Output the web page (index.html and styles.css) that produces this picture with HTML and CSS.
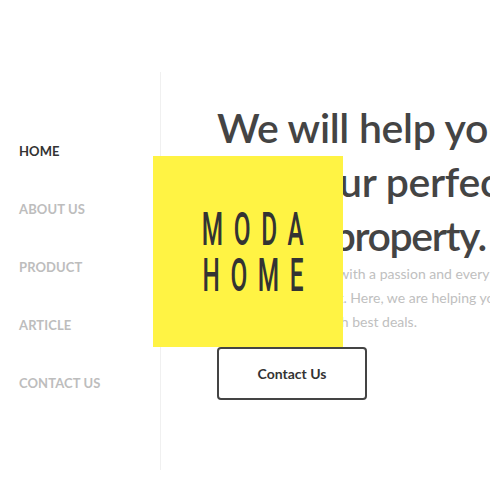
FILE: index.html
```html
<!DOCTYPE html>
<html lang="en">
<head>
<meta charset="utf-8">
<title>Moda Home</title>
<link rel="stylesheet" href="styles.css">
</head>
<body>
<div class="page">
  <aside class="sidebar">
    <nav class="nav">
      <a class="nav-item active" href="#">HOME</a>
      <a class="nav-item" href="#">ABOUT US</a>
      <a class="nav-item" href="#">PRODUCT</a>
      <a class="nav-item" href="#">ARTICLE</a>
      <a class="nav-item" href="#">CONTACT US</a>
    </nav>
  </aside>
  <main class="hero">
    <h1 class="headline"><span class="hl-line">We will help you</span><span class="hl-line">find your perfect</span><span class="hl-line tight">dream property.</span></h1>
    <p class="lead">We are a real team, with a passion and every<br>single client we trust. Here, we are helping you<br>find your houses with best deals.</p>
    <a class="btn" href="#">Contact Us</a>
  </main>
  <div class="logo">
    <span class="logo-line">MODA</span>
    <span class="logo-line">HOME</span>
  </div>
</div>
</body>
</html>
```
FILE: styles.css
```css
html, body {
  margin: 0;
  padding: 0;
  overflow: hidden;
  background: #fff;
}
body {
  font-family: Lato, "Noto Sans", sans-serif;
  color: #444;
  width: 490px;
  height: 490px;
}
.page {
  position: relative;
  display: flex;
  width: 490px;
  height: 490px;
}
.sidebar {
  flex: 0 0 160px;
  margin-top: 72px;
  height: 398px;
  border-right: 1px solid #f0f0f0;
}
.nav {
  display: flex;
  flex-direction: column;
  gap: 38px;
  padding: 69px 0 0 19px;
}
.nav-item {
  font-size: 13px;
  font-weight: 700;
  line-height: 20px;
  letter-spacing: 0.1px;
  color: #bdbdbd;
  text-decoration: none;
}
.nav-item.active {
  color: #333;
}
.hero {
  flex: 1 1 auto;
  min-width: 0;
  overflow: hidden;
  padding: 101px 0 0 56px;
  white-space: nowrap;
}
.headline {
  margin: 0;
  font-size: 41px;
  font-weight: 600;
  line-height: 54px;
  color: #444;
  letter-spacing: -0.3px;
}
.hl-line {
  display: block;
}
.hl-line.tight {
  letter-spacing: -1.4px;
}
.lead {
  margin: -1px 0 0;
  font-size: 14px;
  line-height: 24px;
  color: #c0c0c0;
}
.btn {
  display: flex;
  align-items: center;
  justify-content: center;
  box-sizing: border-box;
  width: 150px;
  height: 53px;
  margin-top: 13px;
  border: 2px solid #444;
  border-radius: 4px;
  font-size: 14px;
  font-weight: 700;
  color: #333;
  text-decoration: none;
}
.logo {
  position: absolute;
  left: 153px;
  top: 156px;
  width: 190px;
  height: 191px;
  background: #fff344;
  display: flex;
  flex-direction: column;
  align-items: center;
  justify-content: center;
  gap: 12px;
}
.logo-line {
  display: inline-block;
  font-family: Roboto, "DejaVu Sans", sans-serif;
  font-weight: 500;
  font-size: 46px;
  line-height: 34px;
  letter-spacing: 20px;
  margin-right: -20px;
  color: #333;
  transform: scaleX(0.53);
}
```
